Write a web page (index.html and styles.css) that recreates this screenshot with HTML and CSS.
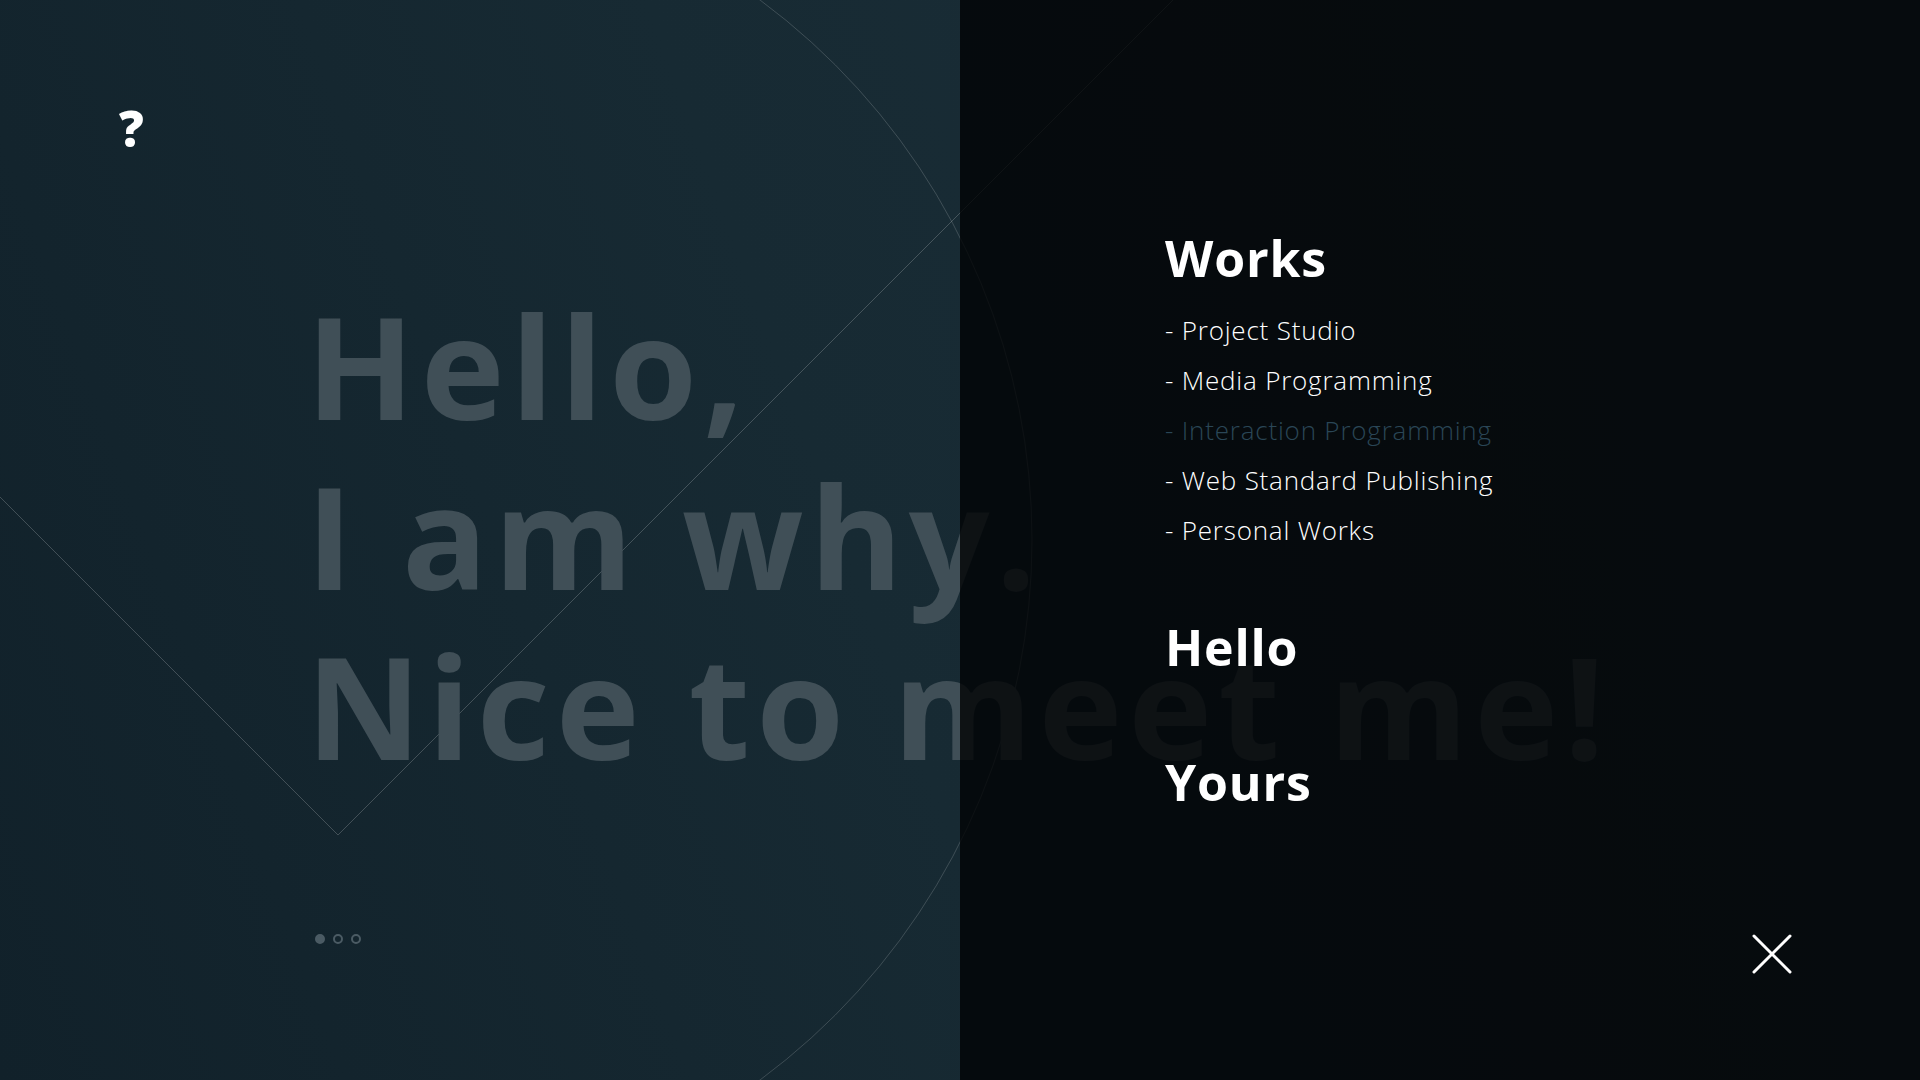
FILE: index.html
```html
<!DOCTYPE html>
<html lang="en">
<head>
<meta charset="utf-8">
<title>Hello, I am why.</title>
<link rel="stylesheet" href="styles.css">
</head>
<body>
<div class="stage">
  <svg class="deco" width="1920" height="1080" viewBox="0 0 1920 1080" aria-hidden="true">
    <circle cx="360" cy="540" r="672" fill="none" stroke="rgba(255,255,255,0.17)" stroke-width="1"/>
    <polyline points="0,497 338,835 1173,0" fill="none" stroke="rgba(255,255,255,0.2)" stroke-width="1"/>
  </svg>

  <main class="hero">
    <div class="logo">?</div>
    <h1 class="headline">
      <span class="line">Hello,</span>
      <span class="line">I am why.</span>
      <span class="line">Nice to meet me!</span>
    </h1>
    <div class="dots">
      <span class="dot dot-on"></span>
      <span class="dot"></span>
      <span class="dot"></span>
    </div>
  </main>

  <aside class="menu">
    <nav class="nav">
      <h2 class="nav-title">Works</h2>
      <ul class="nav-list">
        <li class="nav-item">- Project Studio</li>
        <li class="nav-item">- Media Programming</li>
        <li class="nav-item nav-item-active">- Interaction Programming</li>
        <li class="nav-item">- Web Standard Publishing</li>
        <li class="nav-item">- Personal Works</li>
      </ul>
      <h2 class="nav-title nav-title-hello">Hello</h2>
      <h2 class="nav-title nav-title-yours">Yours</h2>
    </nav>
    <button class="close" aria-label="Close">
      <svg width="40" height="40" viewBox="0 0 40 40">
        <path d="M2 2 L38 38 M38 2 L2 38" stroke="#fff" stroke-width="3" stroke-linecap="round" fill="none"/>
      </svg>
    </button>
  </aside>
</div>
</body>
</html>
```

FILE: styles.css
```css
html, body {
  margin: 0;
  padding: 0;
  background: #0a1216;
}

.stage {
  position: relative;
  width: 1920px;
  height: 1080px;
  overflow: hidden;
  background: linear-gradient(70deg, #11212a 0%, #172a33 45%, #1c2f39 100%);
  font-family: "Open Sans", "Liberation Sans", sans-serif;
}

.deco {
  position: absolute;
  left: 0;
  top: 0;
}

.hero {
  position: relative;
  height: 1080px;
  box-sizing: border-box;
  padding: 104px 0 0 119px;
  display: flex;
  flex-direction: column;
  align-items: flex-start;
}

.logo {
  font-size: 49px;
  font-weight: 800;
  line-height: 49px;
  color: #ffffff;
}

.headline {
  margin: 127px 0 0 187px;
  font-size: 142px;
  font-weight: 700;
  line-height: 170px;
  letter-spacing: 6px;
  color: #404f57;
  white-space: nowrap;
}

.line {
  display: block;
}

.dots {
  margin: 144px 0 0 196px;
  display: flex;
  gap: 8px;
}

.dot {
  width: 10px;
  height: 10px;
  box-sizing: border-box;
  border-radius: 50%;
  border: 2px solid #4b5b64;
}

.dot-on {
  background: #4b5b64;
}

.menu {
  position: absolute;
  left: 960px;
  top: 0;
  width: 960px;
  height: 1080px;
  box-sizing: border-box;
  padding: 228px 128px 106px 205px;
  background: rgba(1, 3, 4, 0.8);
  display: flex;
  flex-direction: column;
}

.nav {
  display: flex;
  flex-direction: column;
  align-items: flex-start;
}

.nav-title {
  margin: 0;
  font-size: 50px;
  font-weight: 700;
  line-height: 60px;
  letter-spacing: 0.8px;
  color: #ffffff;
}

.nav-title-hello {
  margin-top: 62px;
}

.nav-title-yours {
  margin-top: 75px;
}

.nav-list {
  list-style: none;
  margin: 17px 0 0 0;
  padding: 0;
}

.nav-item {
  font-size: 26px;
  font-weight: 300;
  line-height: 50px;
  letter-spacing: 0.8px;
  color: #ffffff;
  white-space: nowrap;
}

.nav-item-active {
  color: #2a4656;
}

.close {
  margin-top: auto;
  align-self: flex-end;
  width: 40px;
  height: 40px;
  padding: 0;
  border: 0;
  background: none;
  display: block;
  cursor: pointer;
}

.close svg {
  display: block;
}
```
